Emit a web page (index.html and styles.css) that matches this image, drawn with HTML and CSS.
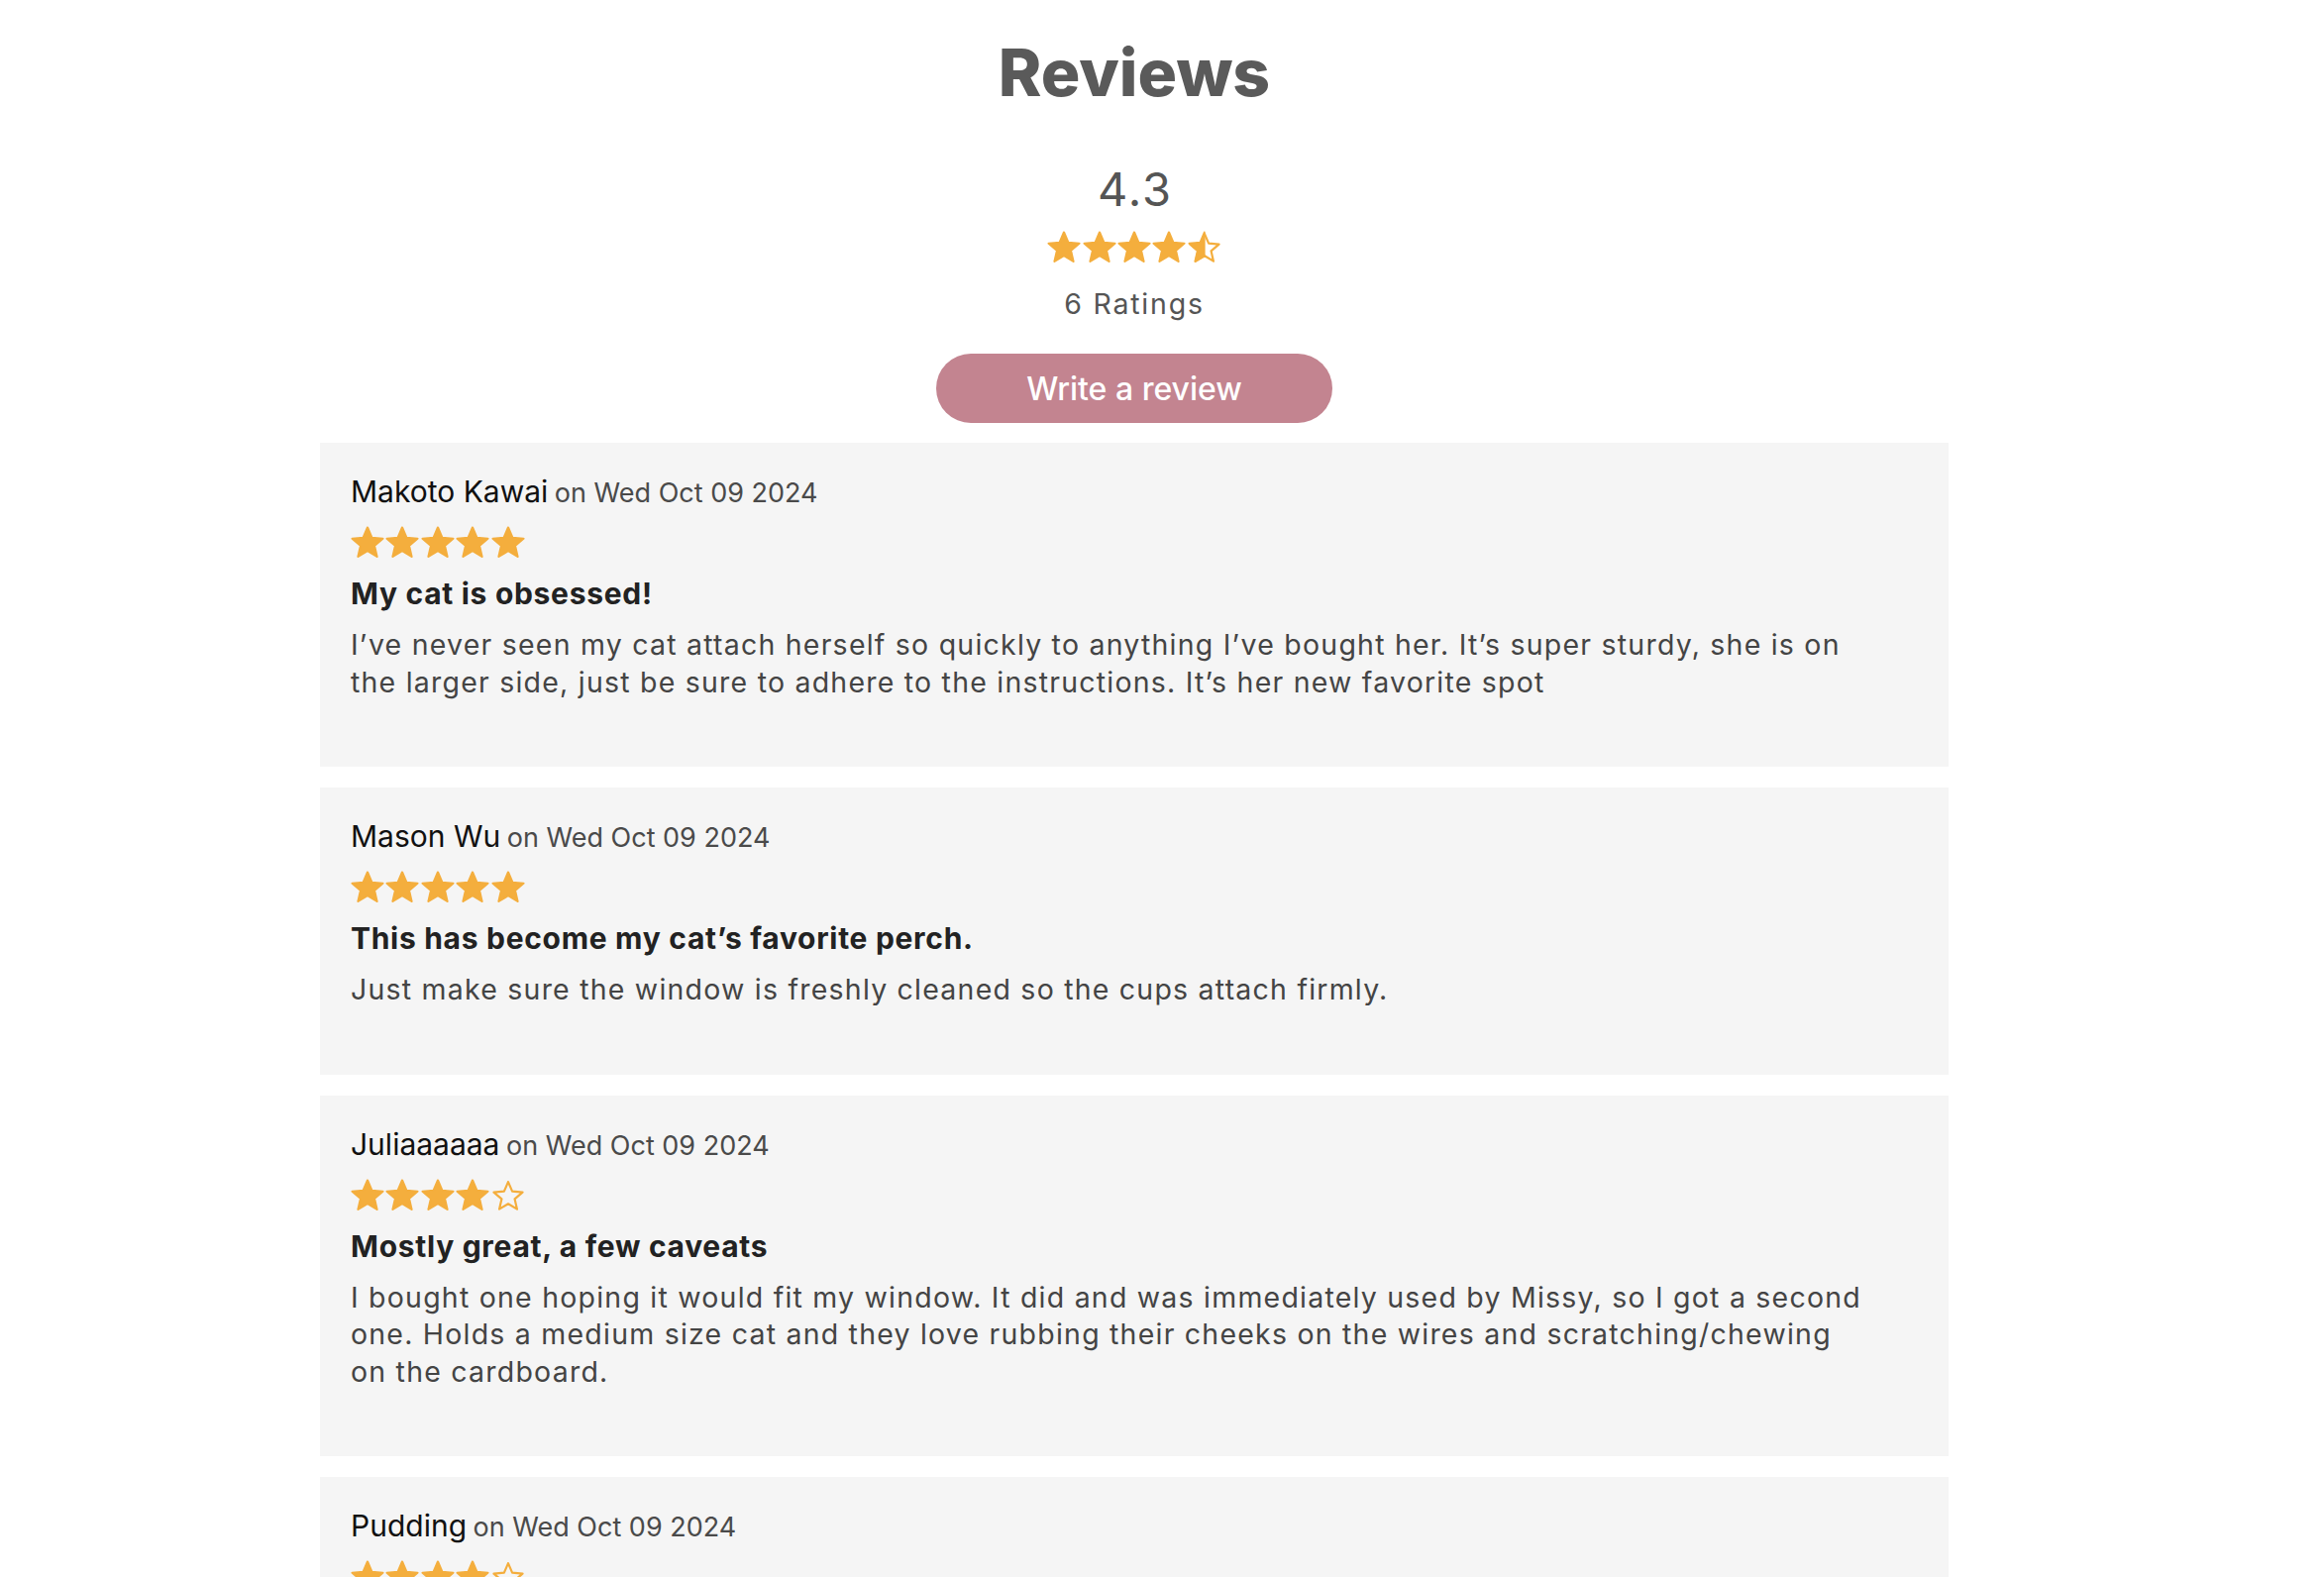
FILE: index.html
```html
<!DOCTYPE html>
<html lang="en">
<head>
<meta charset="utf-8">
<title>Reviews</title>
<link rel="stylesheet" href="styles.css">
</head>
<body>
<svg class="defs" width="0" height="0" aria-hidden="true">
  <defs>
    <symbol id="star-full" viewBox="1 1 22 22">
      <path d="M12 17.27L18.18 21l-1.64-7.03L22 9.24l-7.19-.61L12 2 9.19 8.63 2 9.24l5.46 4.73L5.82 21z" fill="#f4ae3d" stroke="#f4ae3d" stroke-width="1.4" stroke-linejoin="round"/>
    </symbol>
    <symbol id="star-empty" viewBox="1 1 22 22">
      <path d="M12 17.27L18.18 21l-1.64-7.03L22 9.24l-7.19-.61L12 2 9.19 8.63 2 9.24l5.46 4.73L5.82 21z" fill="none" stroke="#f4ae3d" stroke-width="1.5" stroke-linejoin="round" transform="translate(12 12) scale(0.94) translate(-12 -11.6)"/>
    </symbol>
    <clipPath id="half-left"><rect x="0" y="0" width="12.4" height="24"/></clipPath>
    <symbol id="star-half" viewBox="1 1 22 22">
      <path d="M12 17.27L18.18 21l-1.64-7.03L22 9.24l-7.19-.61L12 2 9.19 8.63 2 9.24l5.46 4.73L5.82 21z" fill="#f4ae3d" stroke="#f4ae3d" stroke-width="1.4" stroke-linejoin="round" clip-path="url(#half-left)"/>
      <path d="M12 17.27L18.18 21l-1.64-7.03L22 9.24l-7.19-.61L12 2 9.19 8.63 2 9.24l5.46 4.73L5.82 21z" fill="none" stroke="#f4ae3d" stroke-width="1.5" stroke-linejoin="round" transform="translate(12 12) scale(0.94) translate(-12 -11.6)"/>
    </symbol>
  </defs>
</svg>

<main class="reviews">
  <section class="summary">
    <h1 class="summary-title">Reviews</h1>
    <div class="summary-score">4.3</div>
    <div class="stars stars-summary">
      <svg class="star"><use href="#star-full"/></svg>
      <svg class="star"><use href="#star-full"/></svg>
      <svg class="star"><use href="#star-full"/></svg>
      <svg class="star"><use href="#star-full"/></svg>
      <svg class="star"><use href="#star-half"/></svg>
    </div>
    <div class="summary-count">6 Ratings</div>
    <button class="write-btn" type="button">Write a review</button>
  </section>

  <ul class="review-list">
    <li class="review-card">
      <div class="review-head"><span class="review-name">Makoto Kawai</span> <span class="review-date">on Wed Oct 09 2024</span></div>
      <div class="stars">
        <svg class="star"><use href="#star-full"/></svg>
        <svg class="star"><use href="#star-full"/></svg>
        <svg class="star"><use href="#star-full"/></svg>
        <svg class="star"><use href="#star-full"/></svg>
        <svg class="star"><use href="#star-full"/></svg>
      </div>
      <h3 class="review-title">My cat is obsessed!</h3>
      <p class="review-body">I’ve never seen my cat attach herself so quickly to anything I’ve bought her. It’s super sturdy, she is on the larger side, just be sure to adhere to the instructions. It’s her new favorite spot</p>
    </li>
    <li class="review-card">
      <div class="review-head"><span class="review-name">Mason Wu</span> <span class="review-date">on Wed Oct 09 2024</span></div>
      <div class="stars">
        <svg class="star"><use href="#star-full"/></svg>
        <svg class="star"><use href="#star-full"/></svg>
        <svg class="star"><use href="#star-full"/></svg>
        <svg class="star"><use href="#star-full"/></svg>
        <svg class="star"><use href="#star-full"/></svg>
      </div>
      <h3 class="review-title">This has become my cat’s favorite perch.</h3>
      <p class="review-body">Just make sure the window is freshly cleaned so the cups attach firmly.</p>
    </li>
    <li class="review-card">
      <div class="review-head"><span class="review-name">Juliaaaaaa</span> <span class="review-date">on Wed Oct 09 2024</span></div>
      <div class="stars">
        <svg class="star"><use href="#star-full"/></svg>
        <svg class="star"><use href="#star-full"/></svg>
        <svg class="star"><use href="#star-full"/></svg>
        <svg class="star"><use href="#star-full"/></svg>
        <svg class="star"><use href="#star-empty"/></svg>
      </div>
      <h3 class="review-title">Mostly great, a few caveats</h3>
      <p class="review-body">I bought one hoping it would fit my window. It did and was immediately used by Missy, so I got a second one. Holds a medium size cat and they love rubbing their cheeks on the wires and scratching/chewing on the cardboard.</p>
    </li>
    <li class="review-card">
      <div class="review-head"><span class="review-name">Pudding</span> <span class="review-date">on Wed Oct 09 2024</span></div>
      <div class="stars">
        <svg class="star"><use href="#star-full"/></svg>
        <svg class="star"><use href="#star-full"/></svg>
        <svg class="star"><use href="#star-full"/></svg>
        <svg class="star"><use href="#star-full"/></svg>
        <svg class="star"><use href="#star-empty"/></svg>
      </div>
    </li>
  </ul>
</main>
</body>
</html>
```

FILE: styles.css
```css
html, body {
  margin: 0;
  padding: 0;
  background: #ffffff;
}

body {
  font-family: Inter, "Noto Sans", "Liberation Sans", sans-serif;
  color: #444444;
}

.defs {
  position: absolute;
  width: 0;
  height: 0;
  overflow: hidden;
}

.reviews {
  width: 1644px;
  margin: 0 0 0 323px;
}

.summary {
  display: flex;
  flex-direction: column;
  align-items: center;
}

.summary-title {
  margin: 33px 0 0;
  font-size: 66px;
  line-height: 80px;
  font-weight: 800;
  color: #5a5a5a;
  letter-spacing: 0;
}

.summary-score {
  margin-top: 50px;
  font-size: 47px;
  line-height: 56px;
  font-weight: 400;
  letter-spacing: 2px;
  text-indent: 2px;
  color: #555555;
}

.stars {
  display: flex;
  gap: 1.4px;
  height: 34px;
}

.stars-summary {
  margin-top: 14px;
}

.star {
  width: 34px;
  height: 34px;
  display: block;
}

.summary-count {
  margin-top: 22px;
  font-size: 28.5px;
  line-height: 36px;
  letter-spacing: 1.8px;
  color: #555555;
}

.write-btn {
  margin-top: 32px;
  width: 400px;
  height: 70px;
  border: 0;
  border-radius: 35px;
  background: #c38490;
  color: #ffffff;
  font-family: inherit;
  font-size: 32px;
  font-weight: 500;
  padding: 0;
  cursor: pointer;
}

.review-list {
  list-style: none;
  margin: 20px 0 0;
  padding: 0;
  display: flex;
  flex-direction: column;
  gap: 21px;
}

.review-card {
  background: #f5f5f5;
  padding: 31px 31px 67px;
}

.review-head {
  line-height: 36px;
}

.review-name {
  font-size: 30px;
  color: #111111;
}

.review-date {
  margin-left: 2px;
  font-size: 27px;
  color: #4a4a4a;
}

.review-card .stars {
  margin-top: 12px;
}

.review-title {
  margin: 16px 0 0;
  font-size: 30px;
  line-height: 36px;
  font-weight: 700;
  letter-spacing: 0.7px;
  color: #222222;
}

.review-body {
  margin: 15px 0 0;
  max-width: 1530px;
  font-size: 28.5px;
  line-height: 37.5px;
  letter-spacing: 1.22px;
  color: #444444;
}
```
